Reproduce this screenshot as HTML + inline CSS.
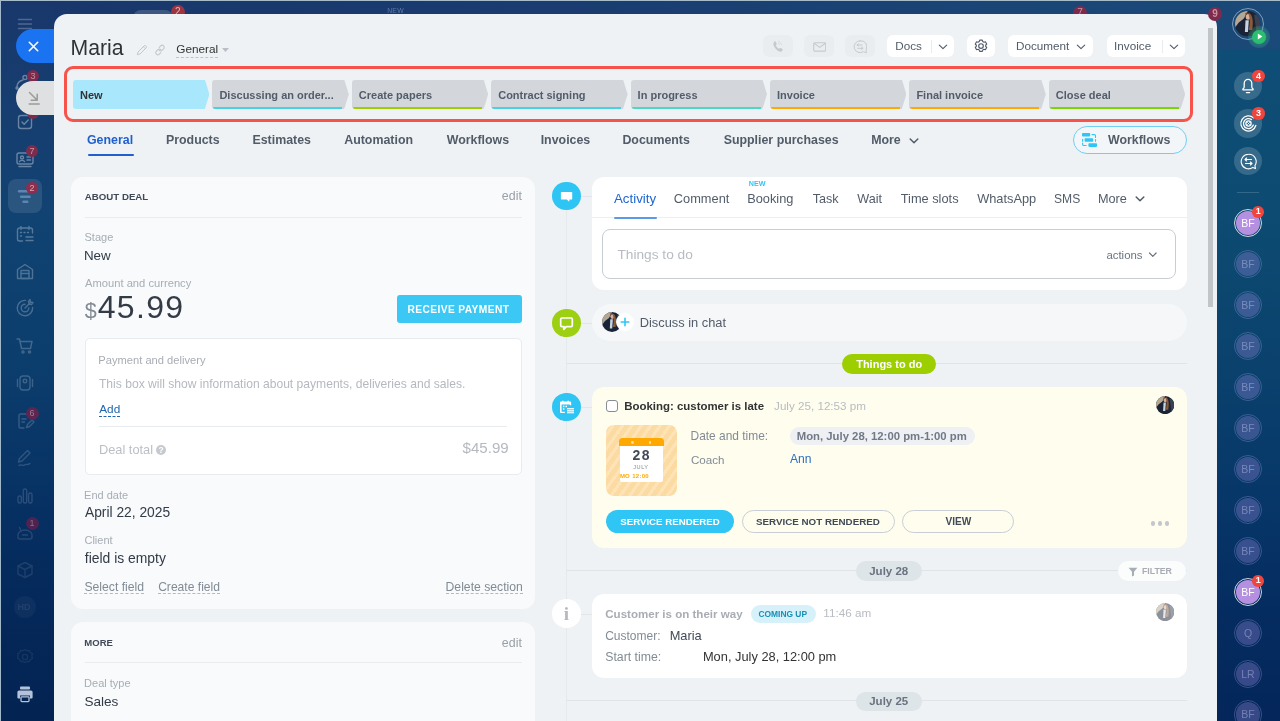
<!DOCTYPE html>
<html lang="en">
<head>
<meta charset="utf-8">
<title>Maria - Deal</title>
<style>
*{box-sizing:border-box;margin:0;padding:0}
html,body{width:1280px;height:721px;overflow:hidden}
body{position:relative;font-family:"Liberation Sans",Arial,sans-serif;color:#333;
 background:linear-gradient(180deg,#19376b 0%,#173d6f 13%,#114372 30%,#0c3e6d 50%,#083466 65%,#052a5c 80%,#032352 100%);}
.abs{position:absolute}
.t{position:absolute;white-space:nowrap;line-height:1}
/* ---------- backdrop ---------- */
#topstrip{left:0;top:0;width:1280px;height:1px;background:#a7bccb}
#leftstrip{left:0;top:0;width:1px;height:721px;background:#a2b9cb}
#rightbar{left:1216px;top:0;width:64px;height:721px;background:linear-gradient(180deg,#0f4e77 0%,#0d4b72 30%,#0a426d 50%,#073668 70%,#052c60 85%,#04265a 100%)}
#rightbartop{left:54px;top:0;width:1226px;height:49px;background:linear-gradient(90deg,#19376b 0%,#1a3c70 40%,#1a4676 80%,#1a4a79 100%)}
/* ---------- panel ---------- */
#panel{left:53.6px;top:14px;width:1163px;height:720px;background:#eef2f4;border-radius:13px 13px 0 0;overflow:hidden}
#closebtn{left:16px;top:29px;width:60px;height:34px;border-radius:17px;background:#1a73f0}
#minbtn{left:16px;top:81px;width:60px;height:34px;border-radius:17px;background:#dfe0e1}
/* header */
.hbtn{position:absolute;top:34.8px;height:22.5px;border-radius:6px;background:#fff}
.hbtn.dim{background:#eaedef}
.hbtn .t{top:5px;font-size:13px;color:#525c69}
.card{background:#f8fafb;border-radius:12px}
/* stages */
#redbox{left:64px;top:66px;width:1129px;height:56px;border:3px solid #f6534a;border-radius:9px}
.stage{position:absolute;top:80px;height:28.5px;width:136.4px}
.stage .body{position:absolute;left:0;top:0;width:131.5px;height:28.5px;background:#d3d7dc;border-radius:3px 0 0 3px}
.stage .tip{position:absolute;left:131px;top:0;width:5.4px;height:28.5px;background:#d3d7dc;clip-path:polygon(0 0,1px 0,100% 50%,1px 100%,0 100%)}
.stage .ul{position:absolute;left:1px;top:26.5px;width:129px;height:2px;border-radius:0 0 0 2px}
.stage .t{left:7px;top:10px;font-size:11px;font-weight:bold;color:#525c69}
</style>
</head>
<body>
<div id="root" style="position:absolute;left:0;top:0;width:1280px;height:721px;overflow:hidden;will-change:transform">
<!-- backdrop -->
<div class="abs" id="rightbar"></div>
<div class="abs" id="rightbartop"></div>
<div class="abs" id="topstrip"></div>
<div class="abs" id="leftstrip"></div>

<div class="abs" style="left:133.4px;top:10px;width:40px;height:8px;border-radius:8px 8px 0 0;background:rgba(255,255,255,0.16)"></div>
<div class="abs" style="left:170.5px;top:4.9px;width:14.6px;height:14.6px;border-radius:50%;background:#9c3540;color:#dcb6bd;font-size:10px;line-height:14.6px;text-align:center">2</div>
<div class="abs" style="left:1073px;top:5.6px;width:14px;height:14px;border-radius:50%;background:#7d2b4d;color:#c9929f;font-size:10px;line-height:14px;text-align:center">7</div>
<div class="t" style="left:387.14px;top:8px;font-size:6.8px;color:#5d7ba6;letter-spacing:0.3px">NEW</div>
<!-- LEFTBAR -->
<div id="leftbar">
<div class="abs" style="left:8px;top:179px;width:33.5px;height:33.5px;border-radius:8px;background:rgba(255,255,255,0.1)"></div>
<svg class="abs" style="left:15.0px;top:14.0px;opacity:0.24" width="20" height="20" viewBox="0 0 20 20" fill="none" stroke="#fff" stroke-width="1.4" stroke-linecap="round" stroke-linejoin="round"><path d="M3.5 5.5h13M3.5 10h13M3.5 14.5h13"/></svg>
<svg class="abs" style="left:13.0px;top:72.0px;opacity:0.36" width="20" height="20" viewBox="0 0 20 20" fill="none" stroke="#fff" stroke-width="1.4" stroke-linecap="round" stroke-linejoin="round"><circle cx="12" cy="5.5" r="2"/><path d="M4 15c0-4 2-6 6-7"/><circle cx="4" cy="16" r="1"/></svg>
<svg class="abs" style="left:14.5px;top:111.5px;opacity:0.36" width="20" height="20" viewBox="0 0 20 20" fill="none" stroke="#fff" stroke-width="1.4" stroke-linecap="round" stroke-linejoin="round"><rect x="3.5" y="3.5" width="13" height="13" rx="2.5"/><path d="M7 10l2.2 2.2L13.2 8"/></svg>
<svg class="abs" style="left:14.5px;top:148.5px;opacity:0.36" width="20" height="20" viewBox="0 0 20 20" fill="none" stroke="#fff" stroke-width="1.4" stroke-linecap="round" stroke-linejoin="round"><rect x="2" y="4" width="16" height="11" rx="2"/><circle cx="7" cy="8.5" r="1.5"/><path d="M4.5 12.5c.5-1.5 4.500-1.500 5 0M12 8h3.500M12 11h3.500M4 17.500h12"/></svg>
<svg class="abs" style="left:15px;top:186px;opacity:0.4" width="20" height="20" viewBox="0 0 20 20" fill="#a9d0ff"><rect x="2.800" y="4" width="14.400" height="2.600" rx="1.300"/><rect x="4.900" y="9.400" width="10.900" height="2.600" rx="1.300"/><rect x="7.300" y="14.400" width="6.200" height="2.700" rx="1.300"/></svg>
<svg class="abs" style="left:15.0px;top:223.5px;opacity:0.29" width="20" height="20" viewBox="0 0 20 20" fill="none" stroke="#fff" stroke-width="1.4" stroke-linecap="round" stroke-linejoin="round"><path d="M17.500 9V6a2 2 0 0 0-2-2h-11a2 2 0 0 0-2 2v9a2 2 0 0 0 2 2h3"/><path d="M6 2.500v3M14 2.500v3M5.500 8.500h1M9 8.500h1M12.500 8.500h1M5.500 12h1M11 13h7M11 16.500h7"/></svg>
<svg class="abs" style="left:15.0px;top:261.0px;opacity:0.26" width="20" height="20" viewBox="0 0 20 20" fill="none" stroke="#fff" stroke-width="1.4" stroke-linecap="round" stroke-linejoin="round"><path d="M2.500 17.500v-9L10 3.500l7.500 5v9z"/><rect x="6" y="9.500" width="8" height="8" rx="0.500"/><path d="M6 12.500h8"/></svg>
<svg class="abs" style="left:15.0px;top:298.0px;opacity:0.24" width="20" height="20" viewBox="0 0 20 20" fill="none" stroke="#fff" stroke-width="1.4" stroke-linecap="round" stroke-linejoin="round"><path d="M17.600 9.500A7.700 7.700 0 1 1 10.500 2.400"/><path d="M13.800 10A3.800 3.800 0 1 1 10 6.200"/><path d="M10 10l6-6M13.500 3.500l.5 2.500 2.500.5 1.500-2-2.500-.5-.5-2.500z"/></svg>
<svg class="abs" style="left:15.0px;top:336.0px;opacity:0.22" width="20" height="20" viewBox="0 0 20 20" fill="none" stroke="#fff" stroke-width="1.4" stroke-linecap="round" stroke-linejoin="round"><path d="M2 3h2.500l2 9.500h9l1.500-7H5.500"/><circle cx="8" cy="16" r="1.100"/><circle cx="14.500" cy="16" r="1.100"/></svg>
<svg class="abs" style="left:15.0px;top:373.0px;opacity:0.20" width="20" height="20" viewBox="0 0 20 20" fill="none" stroke="#fff" stroke-width="1.4" stroke-linecap="round" stroke-linejoin="round"><rect x="5" y="3" width="10" height="14" rx="3"/><circle cx="10" cy="8" r="1.800"/><path d="M2.500 6.500v7M17.500 6.500v7"/></svg>
<svg class="abs" style="left:14.5px;top:411.0px;opacity:0.18" width="20" height="20" viewBox="0 0 20 20" fill="none" stroke="#fff" stroke-width="1.4" stroke-linecap="round" stroke-linejoin="round"><path d="M14 6V4.500a1.500 1.500 0 0 0-1.500-1.500h-7A1.500 1.500 0 0 0 4 4.500v11A1.500 1.500 0 0 0 5.500 17H9"/><path d="M7 8h4M7 11h2.500"/><path d="M11.500 16.500l1-3 4.500-4.500 2 2-4.500 4.500z"/></svg>
<svg class="abs" style="left:15.0px;top:448.0px;opacity:0.16" width="20" height="20" viewBox="0 0 20 20" fill="none" stroke="#fff" stroke-width="1.4" stroke-linecap="round" stroke-linejoin="round"><path d="M3.500 14l1-3.500 8-8 2.500 2.500-8 8z"/><path d="M4 17.500c2-2 3.500 1 5.500-.5s3 .5 5.500-1.500"/></svg>
<svg class="abs" style="left:15.0px;top:486.0px;opacity:0.14" width="20" height="20" viewBox="0 0 20 20" fill="none" stroke="#fff" stroke-width="1.4" stroke-linecap="round" stroke-linejoin="round"><rect x="3" y="10" width="3.400" height="7" rx="1.500"/><rect x="8.300" y="3" width="3.400" height="14" rx="1.500"/><rect x="13.600" y="7" width="3.400" height="10" rx="1.500"/></svg>
<svg class="abs" style="left:15.0px;top:522.0px;opacity:0.13" width="20" height="20" viewBox="0 0 20 20" fill="none" stroke="#fff" stroke-width="1.4" stroke-linecap="round" stroke-linejoin="round"><path d="M3 13a7 5 0 0 1 14 0v2a2 2 0 0 1-2 2H5a2 2 0 0 1-2-2z"/><path d="M6 8.500l-1.500-3M7.500 13h5"/></svg>
<svg class="abs" style="left:15.0px;top:560.0px;opacity:0.10" width="20" height="20" viewBox="0 0 20 20" fill="none" stroke="#fff" stroke-width="1.4" stroke-linecap="round" stroke-linejoin="round"><path d="M10 2.500l7 3.500v8l-7 3.500-7-3.500V6z"/><path d="M3 6l7 3.500L17 6M10 9.500v8"/></svg>
<div class="abs" style="left:14px;top:596px;width:22px;height:22px;border-radius:50%;background:rgba(255,255,255,0.04)"></div>
<div class="t" style="left:17.40px;top:603px;font-size:9px;font-weight:bold;color:rgba(255,255,255,0.08)">HD</div>
<svg class="abs" style="left:15.0px;top:647.0px;opacity:0.07" width="20" height="20" viewBox="0 0 20 20" fill="none" stroke="#fff" stroke-width="1.4" stroke-linecap="round" stroke-linejoin="round"><circle cx="10" cy="10" r="2.600"/><path d="M10 2.500l2 1.200 2.300-.3 1 2.100 2 1.200-.4 2.300.4 2.300-2 1.200-1 2.100-2.300-.3-2 1.200-2-1.200-2.300.3-1-2.100-2-1.200.4-2.300-.4-2.300 2-1.200 1-2.100 2.300.3z"/></svg>
<svg class="abs" style="left:17px;top:686px" width="16" height="17" viewBox="0 0 16 17"><rect x="3" y="0.500" width="10" height="3" rx="0.800" fill="#b5c3da"/><path d="M2 4.500h12a1.600 1.600 0 0 1 1.600 1.600v5.400a1 1 0 0 1-1 1H13V9.500H3v3H1.400a1 1 0 0 1-1-1V6.100A1.600 1.600 0 0 1 2 4.500z" fill="#b5c3da"/><rect x="4" y="10.800" width="8" height="4.800" rx="0.800" fill="none" stroke="#b5c3da" stroke-width="1.300"/></svg>
<div class="abs badge" style="left:26.9px;top:70.1px;width:12px;height:12px;border-radius:50%;background:#7d2b4d;color:#c9929f;font-size:9px;line-height:12px;text-align:center">3</div>
<div class="abs badge" style="left:26.6px;top:107.4px;width:12px;height:12px;border-radius:50%;background:#7d2b4d;color:#c9929f;font-size:9px;line-height:12px;text-align:center"></div>
<div class="abs badge" style="left:26px;top:145px;width:12px;height:12px;border-radius:50%;background:#7d2b4d;color:#c9929f;font-size:9px;line-height:12px;text-align:center">7</div>
<div class="abs badge" style="left:26px;top:182px;width:12px;height:12px;border-radius:50%;background:#8f2d4f;color:#dba9b6;font-size:9px;line-height:12px;text-align:center">2</div>
<div class="abs badge" style="left:25.5px;top:406.5px;width:13.0px;height:13.0px;border-radius:50%;background:#5e2550;color:#a07a92;font-size:9px;line-height:13.0px;text-align:center">6</div>
<div class="abs badge" style="left:25.5px;top:516.5px;width:13.0px;height:13.0px;border-radius:50%;background:#4f2250;color:#8d6a8c;font-size:9px;line-height:13.0px;text-align:center">1</div>
</div>
<!-- RIGHTBAR -->
<div id="rightbar-items">
<div class="abs" style="left:1232px;top:8px;width:32px;height:32px;border-radius:50%;border:1px solid rgba(255,255,255,0.45)"></div>
<svg class="abs" style="left:1235.3px;top:11.3px;opacity:1" width="25.4" height="25.4" viewBox="0 0 20 20"><defs><clipPath id="av1"><circle cx="10" cy="10" r="10"/></clipPath></defs><g clip-path="url(#av1)"><rect width="20" height="20" fill="#1b2437"/><path d="M0 0H10L7 6 3 9 0 13z" fill="#b3a795"/><path d="M15 3h5v14h-3z" fill="#3a4150"/><ellipse cx="10.300" cy="4.600" rx="1.900" ry="2.300" fill="#d5b09b"/><path d="M8.300 7.200h2.600L10.200 16.500H7.800z" fill="#c7d4df"/><path d="M10.500 1.500c3.200.4 4.300 6 3 13.500h-2.800c1.400-4.500 1.200-8.500-.2-13.500z" fill="#8b5a36"/><path d="M8 1.800c.8-.8 2-.9 2.800-.3-.9.300-1.700 1-2.200 2.200z" fill="#7a4c2c"/></g></svg>
<div class="abs" style="left:1248.3px;top:25.6px;width:22px;height:22px;border-radius:50%;background:radial-gradient(circle,rgba(70,200,140,0.3) 0 50%,rgba(70,200,140,0) 100%)"></div>
<div class="abs" style="left:1252.3px;top:29.6px;width:14px;height:14px;border-radius:50%;background:#2dbd70"></div>
<svg class="abs" style="left:1257px;top:33.100px" width="6" height="7" viewBox="0 0 6 7"><path d="M0.800 0.600L5.400 3.500 0.800 6.400z" fill="#fff"/></svg>
<div class="abs" style="left:1233.5px;top:71.5px;width:28.4px;height:28.4px;margin:0.3px;border-radius:50%;background:rgba(255,255,255,0.17)"></div>
<div class="abs" style="left:1233.5px;top:109.0px;width:28.4px;height:28.4px;margin:0.3px;border-radius:50%;background:rgba(255,255,255,0.17)"></div>
<div class="abs" style="left:1233.5px;top:146.5px;width:28.4px;height:28.4px;margin:0.3px;border-radius:50%;background:rgba(255,255,255,0.17)"></div>
<svg class="abs" style="left:1239px;top:77px" width="18" height="19" viewBox="0 0 18 19" fill="none" stroke="#fff" stroke-width="1.300" stroke-linecap="round" stroke-linejoin="round"><path d="M9 2.400c-2.300 0-3.800 1.800-3.800 4.200v3.100c0 .9-.5 1.700-1.300 2.300v.8h10.200V12c-.8-.6-1.300-1.400-1.300-2.300V6.600c0-2.400-1.500-4.200-3.800-4.200z"/><path d="M7.400 15.600h3.200"/></svg>
<svg class="abs" style="left:1238.500px;top:114px" width="19" height="19" viewBox="0 0 19 19" fill="none" stroke="#fff" stroke-width="1.300" stroke-linecap="round"><path d="M16.800 11.500A7.600 7.600 0 1 1 14.500 3.800"/><path d="M14.300 11A5 5 0 1 1 12.500 5.600"/><circle cx="9.500" cy="9.500" r="2.600"/><path d="M8.500 8.500l2 2M10.500 8.500l-2 2" stroke-width="0.900"/></svg>
<svg class="abs" style="left:1238.500px;top:151.500px" width="19" height="19" viewBox="0 0 19 19" fill="none" stroke="#fff" stroke-width="1.100" stroke-linecap="round" stroke-linejoin="round"><path d="M9.500 2.200a7.300 7.300 0 1 0 4.300 13.200l2.700 1.200-.6-3A7.300 7.300 0 0 0 9.500 2.200z"/><path d="M6 7.500h6.500M6 7.500l1.600-1.500M6 7.500l1.600 1.500M13 11.500H6.500M13 11.500l-1.600-1.500M13 11.500l-1.600 1.500"/></svg>
<div class="abs" style="left:1252.3px;top:69.8px;width:12.4px;height:12.4px;border-radius:50%;background:#f0453d;color:#fff;font-size:9px;font-weight:bold;line-height:12.4px;text-align:center">4</div>
<div class="abs" style="left:1252.3px;top:107.3px;width:12.4px;height:12.4px;border-radius:50%;background:#f0453d;color:#fff;font-size:9px;font-weight:bold;line-height:12.4px;text-align:center">3</div>
<div class="abs" style="left:1236.500px;top:192px;width:22.500px;height:1px;background:rgba(255,255,255,0.16)"></div>
<div class="abs" style="left:1233.7px;top:208.7px;width:28.6px;height:28.6px;border-radius:50%;border:1px solid rgba(255,255,255,0.8)"></div>
<div class="abs" style="left:1235.7px;top:210.7px;width:24.6px;height:24.6px;border-radius:50%;background:#b58fe0"></div>
<div class="t" style="left:1228px;width:40px;text-align:center;top:218px;font-size:10.500px;color:#fff">BF</div>
<div class="abs" style="left:1252.4px;top:206.0px;width:11.6px;height:11.6px;border-radius:50%;background:#f0453d;color:#fff;font-size:9px;font-weight:bold;line-height:11.6px;text-align:center">1</div>
<div class="abs" style="left:1233.7px;top:249.7px;width:28.6px;height:28.6px;border-radius:50%;border:1px solid rgba(150,160,220,0.35)"></div>
<div class="abs" style="left:1235.7px;top:251.7px;width:24.6px;height:24.6px;border-radius:50%;background:rgba(140,130,210,0.38)"></div>
<div class="t" style="left:1228px;width:40px;text-align:center;top:259px;font-size:10.500px;color:rgba(200,205,240,0.42)">BF</div>
<div class="abs" style="left:1233.7px;top:290.7px;width:28.6px;height:28.6px;border-radius:50%;border:1px solid rgba(150,160,220,0.35)"></div>
<div class="abs" style="left:1235.7px;top:292.7px;width:24.6px;height:24.6px;border-radius:50%;background:rgba(140,130,210,0.38)"></div>
<div class="t" style="left:1228px;width:40px;text-align:center;top:300px;font-size:10.500px;color:rgba(200,205,240,0.42)">BF</div>
<div class="abs" style="left:1233.7px;top:331.7px;width:28.6px;height:28.6px;border-radius:50%;border:1px solid rgba(150,160,220,0.35)"></div>
<div class="abs" style="left:1235.7px;top:333.7px;width:24.6px;height:24.6px;border-radius:50%;background:rgba(140,130,210,0.38)"></div>
<div class="t" style="left:1228px;width:40px;text-align:center;top:341px;font-size:10.500px;color:rgba(200,205,240,0.42)">BF</div>
<div class="abs" style="left:1233.7px;top:372.7px;width:28.6px;height:28.6px;border-radius:50%;border:1px solid rgba(150,160,220,0.35)"></div>
<div class="abs" style="left:1235.7px;top:374.7px;width:24.6px;height:24.6px;border-radius:50%;background:rgba(140,130,210,0.38)"></div>
<div class="t" style="left:1228px;width:40px;text-align:center;top:382px;font-size:10.500px;color:rgba(200,205,240,0.42)">BF</div>
<div class="abs" style="left:1233.7px;top:413.7px;width:28.6px;height:28.6px;border-radius:50%;border:1px solid rgba(150,160,220,0.35)"></div>
<div class="abs" style="left:1235.7px;top:415.7px;width:24.6px;height:24.6px;border-radius:50%;background:rgba(140,130,210,0.38)"></div>
<div class="t" style="left:1228px;width:40px;text-align:center;top:423px;font-size:10.500px;color:rgba(200,205,240,0.42)">BF</div>
<div class="abs" style="left:1233.7px;top:454.7px;width:28.6px;height:28.6px;border-radius:50%;border:1px solid rgba(150,160,220,0.35)"></div>
<div class="abs" style="left:1235.7px;top:456.7px;width:24.6px;height:24.6px;border-radius:50%;background:rgba(140,130,210,0.38)"></div>
<div class="t" style="left:1228px;width:40px;text-align:center;top:464px;font-size:10.500px;color:rgba(200,205,240,0.42)">BF</div>
<div class="abs" style="left:1233.7px;top:495.7px;width:28.6px;height:28.6px;border-radius:50%;border:1px solid rgba(150,160,220,0.35)"></div>
<div class="abs" style="left:1235.7px;top:497.7px;width:24.6px;height:24.6px;border-radius:50%;background:rgba(140,130,210,0.38)"></div>
<div class="t" style="left:1228px;width:40px;text-align:center;top:505px;font-size:10.500px;color:rgba(200,205,240,0.42)">BF</div>
<div class="abs" style="left:1233.7px;top:536.7px;width:28.6px;height:28.6px;border-radius:50%;border:1px solid rgba(150,160,220,0.35)"></div>
<div class="abs" style="left:1235.7px;top:538.7px;width:24.6px;height:24.6px;border-radius:50%;background:rgba(140,130,210,0.38)"></div>
<div class="t" style="left:1228px;width:40px;text-align:center;top:546px;font-size:10.500px;color:rgba(200,205,240,0.42)">BF</div>
<div class="abs" style="left:1233.7px;top:577.7px;width:28.6px;height:28.6px;border-radius:50%;border:1px solid rgba(255,255,255,0.8)"></div>
<div class="abs" style="left:1235.7px;top:579.7px;width:24.6px;height:24.6px;border-radius:50%;background:#b58fe0"></div>
<div class="t" style="left:1228px;width:40px;text-align:center;top:587px;font-size:10.500px;color:#fff">BF</div>
<div class="abs" style="left:1252.4px;top:575.0px;width:11.6px;height:11.6px;border-radius:50%;background:#f0453d;color:#fff;font-size:9px;font-weight:bold;line-height:11.6px;text-align:center">1</div>
<div class="abs" style="left:1233.7px;top:618.7px;width:28.6px;height:28.6px;border-radius:50%;border:1px solid rgba(150,160,220,0.35)"></div>
<div class="abs" style="left:1235.7px;top:620.7px;width:24.6px;height:24.6px;border-radius:50%;background:rgba(140,130,210,0.38)"></div>
<div class="t" style="left:1228px;width:40px;text-align:center;top:628px;font-size:10.500px;color:rgba(200,205,240,0.42)">Q</div>
<div class="abs" style="left:1233.7px;top:659.7px;width:28.6px;height:28.6px;border-radius:50%;border:1px solid rgba(150,160,220,0.35)"></div>
<div class="abs" style="left:1235.7px;top:661.7px;width:24.6px;height:24.6px;border-radius:50%;background:rgba(140,130,210,0.38)"></div>
<div class="t" style="left:1228px;width:40px;text-align:center;top:669px;font-size:10.500px;color:rgba(200,205,240,0.42)">LR</div>
<div class="abs" style="left:1233.7px;top:700.2px;width:28.6px;height:28.6px;border-radius:50%;border:1px solid rgba(150,160,220,0.35)"></div>
<div class="abs" style="left:1235.7px;top:702.2px;width:24.6px;height:24.6px;border-radius:50%;background:rgba(140,130,210,0.38)"></div>
<div class="t" style="left:1228px;width:40px;text-align:center;top:709px;font-size:10.500px;color:rgba(200,205,240,0.42)">BF</div>
</div>

<div class="abs" id="closebtn"></div>
<div class="abs" id="minbtn"></div>

<svg class="abs" style="left:28px;top:41px" width="11" height="11" viewBox="0 0 11 11"><path d="M1.300 1.300l8.400 8.400M9.700 1.300L1.300 9.700" stroke="#fff" stroke-width="1.600" stroke-linecap="round"/></svg>
<svg class="abs" style="left:27px;top:90px" width="14" height="16" viewBox="0 0 14 16"><path d="M2.500 2.500l7.500 7.500M10.200 4.200v6h-6M2.200 14h10" fill="none" stroke="#9b9b9b" stroke-width="1.500" stroke-linecap="round" stroke-linejoin="round"/></svg>
<div class="abs" id="panel"></div>
<div class="abs" style="left:1208px;top:7px;width:14px;height:14px;border-radius:50%;background:#7d2b4d;color:#c9929f;font-size:10px;font-weight:bold;line-height:14px;text-align:center">9</div>
<div class="abs" style="left:1208.4px;top:27.500px;width:4.500px;height:279px;background:#c1c5c7"></div>


<!-- HEADER -->
<div class="t" style="left:70.56px;top:37px;font-size:21.2px;color:#2f3237">Maria</div>
<div class="t" style="left:176.21px;top:44px;font-size:11.8px;color:#333;border-bottom:1px dashed #bfc4ca;padding-bottom:1.2px">General</div>
<svg class="abs" style="left:136px;top:43.5px" width="12" height="12" viewBox="0 0 12 12" fill="none" stroke="#c3c8ce" stroke-width="1" stroke-linejoin="round"><path d="M1.300 10.700l.7-2.700L8.200 1.800a1.100 1.100 0 0 1 1.500 0l.5.500a1.100 1.100 0 0 1 0 1.500L4 10z"/><path d="M7.300 2.700l2 2"/></svg>
<svg class="abs" style="left:153.500px;top:43.500px" width="12" height="12" viewBox="0 0 12 12" fill="none" stroke="#c3c8ce" stroke-width="1.100" stroke-linecap="round"><path d="M5.200 3.400l1.500-1.500a2.050 2.050 0 0 1 2.900 2.900L8.100 6.300a2.050 2.050 0 0 1-2.900 0"/><path d="M6.800 8.600L5.300 10.100a2.050 2.050 0 0 1-2.900-2.900l1.500-1.500a2.050 2.050 0 0 1 2.900 0"/></svg>
<svg class="abs" style="left:222px;top:47.800px" width="7" height="4" viewBox="0 0 7 4"><path d="M0 0h7L3.500 4z" fill="#b9bfc6"/></svg>

<div class="hbtn dim" style="left:763.3px;width:29.3px"></div>
<div class="hbtn dim" style="left:803.8px;width:29.8px"></div>
<div class="hbtn dim" style="left:845px;width:30px"></div>
<div class="hbtn" style="left:887.3px;width:66.4px"></div>
<div class="hbtn" style="left:967px;width:28px"></div>
<div class="hbtn" style="left:1008px;width:85px"></div>
<div class="hbtn" style="left:1106.6px;width:78.6px"></div>
<div class="t" style="left:895.24px;top:40px;font-size:11.7px;color:#525c69">Docs</div>
<div class="t" style="left:1015.94px;top:40px;font-size:11.7px;color:#525c69">Document</div>
<div class="t" style="left:1114.12px;top:40px;font-size:11.7px;color:#525c69">Invoice</div>
<div class="abs" style="left:930.5px;top:40px;width:1px;height:13px;background:#e9ecef"></div>
<div class="abs" style="left:1161.5px;top:40px;width:1px;height:13px;background:#e9ecef"></div>
<svg class="abs" style="left:936.5px;top:42px" width="12" height="10" viewBox="0 0 12 10"><path d="M2.300 3.200 L6 6.600 L9.700 3.200" fill="none" stroke="#525c69" stroke-width="1.150" stroke-linecap="round" stroke-linejoin="round"/></svg>
<svg class="abs" style="left:1074.5px;top:42px" width="12" height="10" viewBox="0 0 12 10"><path d="M2.300 3.200 L6 6.600 L9.700 3.200" fill="none" stroke="#525c69" stroke-width="1.150" stroke-linecap="round" stroke-linejoin="round"/></svg>
<svg class="abs" style="left:1167.5px;top:42px" width="12" height="10" viewBox="0 0 12 10"><path d="M2.300 3.200 L6 6.600 L9.700 3.200" fill="none" stroke="#525c69" stroke-width="1.150" stroke-linecap="round" stroke-linejoin="round"/></svg>

<svg class="abs" style="left:771.500px;top:39.500px" width="12" height="13" viewBox="0 0 12 13"><path d="M2.300 1.600c.5-.5 1.200-.4 1.500.2l.8 1.700c.2.400.1.900-.2 1.200l-.6.600c.6 1.500 1.700 2.700 3.100 3.500l.7-.6c.4-.3.800-.4 1.200-.1l1.500 1c.5.400.6 1.100.1 1.500l-.6.600c-.6.600-1.500.8-2.300.4C4.500 10.300 2.300 7.800 1.400 4.700c-.2-.900 0-1.800.5-2.500z" fill="#c6cacf"/><path d="M6.300 1.300c1.600.2 2.900 1.500 3.200 3.100M6.200 3.200c.7.200 1.200.7 1.400 1.400" fill="none" stroke="#d3d6da" stroke-width="0.800" stroke-linecap="round"/></svg>
<svg class="abs" style="left:812.500px;top:41.500px" width="13.500" height="10" viewBox="0 0 13.500 10" fill="none" stroke="#c6cacf" stroke-width="1.100" stroke-linejoin="round"><rect x="0.700" y="0.700" width="12" height="8.400" rx="1"/><path d="M1 1.200l5.700 4.200 5.700-4.200"/></svg>
<svg class="abs" style="left:852.500px;top:39.500px" width="14" height="14" viewBox="0 0 14 14" fill="none" stroke="#c6cacf" stroke-width="1" stroke-linecap="round" stroke-linejoin="round"><path d="M7 0.800a5.900 5.900 0 1 0 3.300 10.800l3 1.200-.1-3.500A5.900 5.900 0 0 0 7 .8z"/><path d="M4.200 5h5M4.200 5l1.300-1.200M4.200 5l1.300 1.200M9.800 8.300h-5M9.800 8.300L8.500 7.100M9.800 8.300L8.500 9.500"/></svg>
<svg class="abs" style="left:973.800px;top:39.300px" width="14" height="14" viewBox="0 0 14 14" fill="none" stroke="#525c69" stroke-width="1.150" stroke-linejoin="round"><path d="M5.700 1.100h2.600l.5 1.500 1.100.6 1.500-.4 1.300 2.200-1 1.100v1.300l1 1.100-1.300 2.200-1.500-.4-1.100.6-.5 1.500H5.700l-.5-1.500-1.100-.6-1.500.4-1.300-2.200 1-1.100V6.100l-1-1.100 1.300-2.200 1.500.4 1.100-.6z" stroke-linejoin="round"/><circle cx="7" cy="7" r="2.300"/></svg>
<!-- STAGES -->
<div class="abs" id="redbox"></div>
<div class="stage" style="left:73.0px"><div class="body" style="background:#a9e7fc"></div><div class="tip" style="background:#a9e7fc"></div><div class="t" style="color:#333">New</div></div>
<div class="stage" style="left:212.4px"><div class="body"></div><div class="tip"></div><div class="ul" style="background:#47d1e2"></div><div class="t">Discussing an order...</div></div>
<div class="stage" style="left:351.8px"><div class="body"></div><div class="tip"></div><div class="ul" style="background:#9dcf00"></div><div class="t">Create papers</div></div>
<div class="stage" style="left:491.2px"><div class="body"></div><div class="tip"></div><div class="ul" style="background:#47d1e2"></div><div class="t">Contract signing</div></div>
<div class="stage" style="left:630.6px"><div class="body"></div><div class="tip"></div><div class="ul" style="background:#4dd8c4"></div><div class="t">In progress</div></div>
<div class="stage" style="left:770.0px"><div class="body"></div><div class="tip"></div><div class="ul" style="background:#ffa900"></div><div class="t">Invoice</div></div>
<div class="stage" style="left:909.4px"><div class="body"></div><div class="tip"></div><div class="ul" style="background:#ffa900"></div><div class="t">Final invoice</div></div>
<div class="stage" style="left:1048.8px"><div class="body"></div><div class="tip"></div><div class="ul" style="background:#7bd500"></div><div class="t">Close deal</div></div>

<!-- TABS -->
<div id="tabs">
<div class="t" style="left:86.99px;top:134px;font-size:12.4px;font-weight:bold;color:#525c69;color:#1f5fd0">General</div>
<div class="t" style="left:165.92px;top:134px;font-size:12.4px;font-weight:bold;color:#525c69;">Products</div>
<div class="t" style="left:252.42px;top:134px;font-size:12.4px;font-weight:bold;color:#525c69;">Estimates</div>
<div class="t" style="left:344.19px;top:134px;font-size:12.4px;font-weight:bold;color:#525c69;">Automation</div>
<div class="t" style="left:446.74px;top:134px;font-size:12.4px;font-weight:bold;color:#525c69;">Workflows</div>
<div class="t" style="left:540.67px;top:134px;font-size:12.4px;font-weight:bold;color:#525c69;">Invoices</div>
<div class="t" style="left:622.42px;top:134px;font-size:12.4px;font-weight:bold;color:#525c69;">Documents</div>
<div class="t" style="left:723.64px;top:134px;font-size:12.4px;font-weight:bold;color:#525c69;">Supplier purchases</div>
<div class="t" style="left:871.17px;top:134px;font-size:12.4px;font-weight:bold;color:#525c69;">More</div>
<div class="abs" style="left:87.5px;top:153.7px;width:46.5px;height:2px;background:#1f5fd0;border-radius:1px"></div>
<svg class="abs" style="left:908px;top:136px" width="12" height="10" viewBox="0 0 12 10"><path d="M2.2 3 L6 6.8 L9.8 3" fill="none" stroke="#525c69" stroke-width="1.5" stroke-linecap="round" stroke-linejoin="round"/></svg>
<div class="abs" style="left:1073px;top:125.5px;width:113.5px;height:28.5px;border:1px solid #6fcef3;border-radius:14.5px;background:#f3f6f8"></div>
<svg class="abs" style="left:1081px;top:132px" width="17" height="16" viewBox="0 0 17 16"><g fill="#2fc6f6"><rect x="1" y="1" width="8.2" height="3.6" rx="0.8"/><rect x="3.6" y="6.2" width="8.6" height="3.6" rx="0.8"/><rect x="7.4" y="11.3" width="8.6" height="3.6" rx="0.8"/></g><g fill="none" stroke="#2fc6f6" stroke-width="1.1" stroke-linecap="round"><path d="M11 2.6h2.2a1.3 1.3 0 0 1 1.3 1.3v1.6"/><path d="M14.5 7.6v1.6"/><path d="M1.6 7.2v2"/><path d="M1.6 11v1.2a1.3 1.3 0 0 0 1.3 1.3h2.2"/></g></svg>
<div class="t" style="left:1107.99px;top:134px;font-size:12.4px;font-weight:bold;color:#525c69">Workflows</div>
</div>
<!-- LEFTCOL -->
<div id="leftcol">
<div class="abs card" style="left:71px;top:177px;width:464px;height:431.5px"></div>
<div class="abs card" style="left:71px;top:622px;width:464px;height:140px"></div>
<div class="t" style="left:84.76px;top:192px;font-size:9.7px;font-weight:bold;color:#414a57;letter-spacing:0">ABOUT DEAL</div>
<div class="t" style="right:758.16px;top:190px;font-size:12.4px;color:#9aa0a8">edit</div>
<div class="abs" style="left:85px;top:216.5px;width:436.5px;height:1px;background:#e9ecef"></div>
<div class="t" style="left:84.50px;top:232px;font-size:11px;color:#a8adb4">Stage</div>
<div class="t" style="left:83.90px;top:249px;font-size:13.4px;color:#333b47">New</div>
<div class="t" style="left:84.98px;top:278px;font-size:11.2px;color:#a8adb4">Amount and currency</div>
<div class="t" style="left:84.77px;top:301px;font-size:21.5px;color:#828b95">$</div>
<div class="t" style="left:97.77px;top:291px;font-size:32px;color:#333b47;letter-spacing:1.3px">45.99</div>
<div class="abs" style="left:397px;top:294.5px;width:125px;height:28.5px;border-radius:3px;background:#3bc8f5"></div>
<div class="t" style="left:407.62px;top:305px;font-size:10.2px;font-weight:bold;color:#fff;letter-spacing:0.4px">RECEIVE PAYMENT</div>
<div class="abs" style="left:85px;top:338px;width:436.5px;height:136.8px;border-radius:5px;background:#fff;border:1px solid #e9ecef"></div>
<div class="t" style="left:98.34px;top:355px;font-size:11.15px;color:#a8adb4">Payment and delivery</div>
<div class="t" style="left:98.98px;top:378px;font-size:12.1px;color:#b5b9bf">This box will show information about payments, deliveries and sales.</div>
<div class="t" style="left:99.23px;top:404px;font-size:11.8px;color:#2067b0;border-bottom:1px dashed #2067b0;padding-bottom:0">Add</div>
<div class="abs" style="left:99px;top:426px;width:408px;height:1px;background:#e9ecef"></div>
<div class="t" style="left:99.00px;top:444px;font-size:12.8px;color:#bbbfc5">Deal total</div>
<div class="abs" style="left:155.8px;top:444.6px;width:10.4px;height:10.4px;border-radius:50%;background:#c6cacf"></div>
<div class="t" style="left:158.51px;top:446px;font-size:8.5px;color:#fff;font-weight:bold">?</div>
<div class="t" style="right:771.28px;top:440px;font-size:15.1px;color:#b5b9bf">$45.99</div>
<div class="t" style="left:84.10px;top:490px;font-size:11px;color:#a8adb4">End date</div>
<div class="t" style="left:84.97px;top:506px;font-size:13.8px;color:#333b47">April 22, 2025</div>
<div class="t" style="left:84.44px;top:535px;font-size:11px;color:#a8adb4">Client</div>
<div class="t" style="left:84.80px;top:552px;font-size:13.9px;color:#333b47">field is empty</div>
<div class="t" style="left:84.45px;top:581px;font-size:12.2px;color:#828b95;border-bottom:1px dashed #b4b9bf;padding-bottom:0">Select field</div>
<div class="t" style="left:158.14px;top:581px;font-size:12.1px;color:#828b95;border-bottom:1px dashed #b4b9bf;padding-bottom:0">Create field</div>
<div class="t" style="right:757.21px;top:581px;font-size:12.2px;color:#828b95;border-bottom:1px dashed #b4b9bf;padding-bottom:0">Delete section</div>
<div class="t" style="left:84.36px;top:638px;font-size:9.5px;font-weight:bold;color:#414a57">MORE</div>
<div class="t" style="right:758.16px;top:637px;font-size:12.4px;color:#9aa0a8">edit</div>
<div class="abs" style="left:85px;top:662px;width:436.5px;height:1px;background:#e9ecef"></div>
<div class="t" style="left:84.10px;top:678px;font-size:11px;color:#a8adb4">Deal type</div>
<div class="t" style="left:84.38px;top:695px;font-size:13.6px;color:#333b47">Sales</div>
</div>
<!-- RIGHTCOL -->
<div id="rightcol">
<div class="abs" style="left:566px;top:196px;width:1.2px;height:540px;background:#e5e8ec"></div>
<div class="abs" style="left:567px;top:363px;width:619.5px;height:1px;background:#e0e4e8"></div>
<div class="abs" style="left:567px;top:570px;width:619.5px;height:1px;background:#e0e4e8"></div>
<div class="abs" style="left:567px;top:700px;width:619.5px;height:1px;background:#e0e4e8"></div>
<div class="abs" style="left:575px;top:196px;width:18px;height:1px;background:#e2e6ea"></div>
<div class="abs" style="left:575px;top:322.5px;width:18px;height:1px;background:#e2e6ea"></div>
<div class="abs" style="left:575px;top:406.5px;width:18px;height:1px;background:#e2e6ea"></div>
<div class="abs" style="left:575px;top:613.5px;width:18px;height:1px;background:#e2e6ea"></div>
<div class="abs" style="left:591.5px;top:176.5px;width:595px;height:113.5px;background:#fff;border-radius:12px"></div>
<div class="abs" style="left:591.5px;top:217px;width:595px;height:1px;background:#edf0f2"></div>
<div class="t" style="left:613.97px;top:192px;font-size:13.3px;color:#2067d0">Activity</div>
<div class="t" style="left:673.85px;top:193px;font-size:12.8px;color:#525c69">Comment</div>
<div class="t" style="left:747.20px;top:193px;font-size:12.8px;color:#525c69">Booking</div>
<div class="t" style="left:812.72px;top:193px;font-size:12.6px;color:#525c69">Task</div>
<div class="t" style="left:857.34px;top:193px;font-size:12.6px;color:#525c69">Wait</div>
<div class="t" style="left:900.71px;top:193px;font-size:12.8px;color:#525c69">Time slots</div>
<div class="t" style="left:977.14px;top:193px;font-size:12.8px;color:#525c69">WhatsApp</div>
<div class="t" style="left:1054.05px;top:193px;font-size:12.1px;color:#525c69">SMS</div>
<div class="t" style="left:1097.96px;top:193px;font-size:12.7px;color:#525c69">More</div>
<div class="t" style="left:748.77px;top:180px;font-size:7.2px;font-weight:bold;color:#2fc6f6">NEW</div>
<div class="abs" style="left:614px;top:216.7px;width:42.5px;height:2px;background:#5b9be6;border-radius:1px"></div>
<svg class="abs" style="left:1133.8px;top:194px" width="12" height="10" viewBox="0 0 12 10"><path d="M2.2 3 L6 6.8 L9.8 3" fill="none" stroke="#525c69" stroke-width="1.5" stroke-linecap="round" stroke-linejoin="round"/></svg>
<div class="abs" style="left:602.25px;top:229.25px;width:573.25px;height:50px;border:1px solid #c6cdd3;border-radius:8px;background:#fff"></div>
<div class="t" style="left:617.44px;top:248px;font-size:13.7px;color:#b8bcc2">Things to do</div>
<div class="t" style="left:1106.42px;top:250px;font-size:11.4px;color:#6a737f">actions</div>
<svg class="abs" style="left:1147px;top:250px" width="12" height="10" viewBox="0 0 12 10"><path d="M2.5 3 L5.8 6.3 L9.1 3" fill="none" stroke="#6a737f" stroke-width="1.2" stroke-linecap="round" stroke-linejoin="round"/></svg>
<div class="abs" style="left:591.5px;top:304.25px;width:595px;height:37px;background:#f5f7f9;border-radius:18.5px"></div>
<svg class="abs" style="left:602px;top:311.8px;opacity:1" width="20" height="20" viewBox="0 0 20 20"><defs><clipPath id="av2"><circle cx="10" cy="10" r="10"/></clipPath></defs><g clip-path="url(#av2)"><rect width="20" height="20" fill="#1b2437"/><path d="M0 0H10L7 6 3 9 0 13z" fill="#b3a795"/><path d="M15 3h5v14h-3z" fill="#3a4150"/><ellipse cx="10.300" cy="4.600" rx="1.900" ry="2.300" fill="#d5b09b"/><path d="M8.300 7.200h2.600L10.200 16.500H7.800z" fill="#c7d4df"/><path d="M10.500 1.500c3.200.4 4.300 6 3 13.500h-2.800c1.400-4.500 1.200-8.500-.2-13.500z" fill="#8b5a36"/><path d="M8 1.800c.8-.8 2-.9 2.800-.3-.9.300-1.700 1-2.200 2.200z" fill="#7a4c2c"/></g></svg>
<div class="abs" style="left:616.3px;top:312.9px;width:18px;height:18px;border-radius:50%;background:#fff"></div>
<svg class="abs" style="left:619.6px;top:316.9px" width="10" height="10" viewBox="0 0 10 10"><path d="M5 1.2v7.6M1.2 5h7.6" stroke="#2fc6f6" stroke-width="1.6" stroke-linecap="round"/></svg>
<div class="t" style="left:639.70px;top:317px;font-size:12.85px;color:#525c69">Discuss in chat</div>
<div class="abs" style="left:552.2px;top:181.8px;width:28.6px;height:28.6px;border-radius:50%;background:#2ec4f4"></div>
<div class="abs" style="left:552.2px;top:308.7px;width:28.6px;height:28.6px;border-radius:50%;background:#9dcf12"></div>
<div class="abs" style="left:552.2px;top:392.5px;width:28.6px;height:28.6px;border-radius:50%;background:#2ec4f4"></div>
<div class="abs" style="left:552.2px;top:599.2px;width:28.6px;height:28.6px;border-radius:50%;background:#fff"></div>
<div class="abs" style="left:842px;top:354px;width:93.7px;height:20px;border-radius:10px;background:#9dcf00"></div>
<div class="t" style="left:856.18px;top:359px;font-size:11px;font-weight:bold;color:#fff">Things to do</div>
<div class="abs" style="left:591.5px;top:387px;width:595px;height:160.6px;background:#fefdee;border-radius:12px"></div>
<div class="abs" style="left:605.75px;top:400.25px;width:11.75px;height:11.75px;border:1.2px solid #858c95;border-radius:3px;background:#fff"></div>
<div class="t" style="left:624.23px;top:401px;font-size:11.45px;font-weight:bold;color:#333">Booking: customer is late</div>
<div class="t" style="left:774.07px;top:400px;font-size:11.65px;color:#b8bcc2">July 25, 12:53 pm</div>
<svg class="abs" style="left:1156.0px;top:395.79999999999995px;opacity:1" width="18.2" height="18.2" viewBox="0 0 20 20"><defs><clipPath id="av3"><circle cx="10" cy="10" r="10"/></clipPath></defs><g clip-path="url(#av3)"><rect width="20" height="20" fill="#1b2437"/><path d="M0 0H10L7 6 3 9 0 13z" fill="#b3a795"/><path d="M15 3h5v14h-3z" fill="#3a4150"/><ellipse cx="10.300" cy="4.600" rx="1.900" ry="2.300" fill="#d5b09b"/><path d="M8.300 7.200h2.600L10.200 16.500H7.800z" fill="#c7d4df"/><path d="M10.500 1.500c3.200.4 4.300 6 3 13.500h-2.800c1.400-4.500 1.200-8.500-.2-13.500z" fill="#8b5a36"/><path d="M8 1.800c.8-.8 2-.9 2.800-.3-.9.300-1.700 1-2.200 2.200z" fill="#7a4c2c"/></g></svg>
<div class="abs" style="left:606.2px;top:425px;width:71.2px;height:70.5px;border-radius:8px;background:repeating-linear-gradient(125deg,#fcdba3 0 4.6px,#fde3b5 4.6px 7.7px)"></div>
<div class="abs" style="left:619.8px;top:440px;width:43.1px;height:42.1px;background:#fff;border-radius:0 0 2px 2px"></div>
<div class="abs" style="left:618.9px;top:438.2px;width:44.8px;height:7.6px;background:#ffa900;border-radius:3.5px 3.5px 0 0"></div>
<div class="abs" style="left:631.2px;top:440.9px;width:2.8px;height:2.8px;border-radius:50%;background:#ffe0a3"></div>
<div class="abs" style="left:648.6px;top:440.9px;width:2.8px;height:2.8px;border-radius:50%;background:#ffe0a3"></div>
<div class="t" style="left:632.61px;top:448px;font-size:14px;font-weight:bold;color:#414a57;letter-spacing:1.3px">28</div>
<div class="t" style="left:633.31px;top:465px;font-size:5.6px;color:#828b95;letter-spacing:0.5px">JULY</div>
<div class="t" style="left:619.90px;top:473px;font-size:6px;font-weight:bold;color:#ffa900">MO</div>
<div class="t" style="left:632.22px;top:473px;font-size:6px;font-weight:bold;color:#ffa900;letter-spacing:0.25px">12:00</div>
<div class="t" style="left:690.52px;top:431px;font-size:11.95px;color:#828b95">Date and time:</div>
<div class="abs" style="left:789.5px;top:427px;width:185.75px;height:18px;border-radius:9px;background:#eef0f4"></div>
<div class="t" style="left:796.74px;top:431px;font-size:11.33px;font-weight:bold;color:#707985">Mon, July 28, 12:00 pm-1:00 pm</div>
<div class="t" style="left:690.91px;top:454px;font-size:11.6px;color:#828b95">Coach</div>
<div class="t" style="left:789.98px;top:453px;font-size:12.1px;color:#2a6fc0">Ann</div>
<div class="abs" style="left:605.75px;top:510.25px;width:128.5px;height:22.75px;border-radius:11.5px;background:#2fc6f6"></div>
<div class="t" style="left:620.22px;top:517px;font-size:9.7px;font-weight:bold;color:#fff">SERVICE RENDERED</div>
<div class="abs" style="left:741.75px;top:510.25px;width:153px;height:22.75px;border-radius:11.5px;border:1px solid #c8ced4;background:transparent"></div>
<div class="t" style="left:755.97px;top:517px;font-size:9.8px;font-weight:bold;color:#414a57">SERVICE NOT RENDERED</div>
<div class="abs" style="left:902.25px;top:510.25px;width:112px;height:22.75px;border-radius:11.5px;border:1px solid #c8ced4;background:transparent"></div>
<div class="t" style="left:945.43px;top:517px;font-size:10.1px;font-weight:bold;color:#414a57">VIEW</div>
<div class="abs" style="left:1150.5px;top:521px;width:4.5px;height:4.5px;border-radius:50%;background:#c3c7cd"></div>
<div class="abs" style="left:1157.5px;top:521px;width:4.5px;height:4.5px;border-radius:50%;background:#c3c7cd"></div>
<div class="abs" style="left:1164.5px;top:521px;width:4.5px;height:4.5px;border-radius:50%;background:#c3c7cd"></div>
<div class="abs" style="left:856px;top:561.3px;width:66.2px;height:19.4px;border-radius:10px;background:#dde5e8"></div>
<div class="t" style="left:869.23px;top:566px;font-size:11.5px;font-weight:bold;color:#6a737f">July 28</div>
<div class="abs" style="left:1118.4px;top:561.3px;width:67.9px;height:19.4px;border-radius:10px;background:#fbfcfc"></div>
<svg class="abs" style="left:1127.5px;top:566.5px" width="10" height="10" viewBox="0 0 10 10"><path d="M0.6 0.8h8.8L6 4.8v3.6L4 9.4V4.8z" fill="#a8adb4"/></svg>
<div class="t" style="left:1141.91px;top:567px;font-size:8.76px;font-weight:bold;color:#a8adb4">FILTER</div>
<div class="abs" style="left:591.5px;top:594px;width:595px;height:84px;background:#fff;border-radius:12px"></div>
<div class="t" style="left:605.28px;top:609px;font-size:11.56px;font-weight:bold;color:#a8adb4">Customer is on their way</div>
<div class="abs" style="left:750.5px;top:605.25px;width:65px;height:17.5px;border-radius:9px;background:#d7f1fb"></div>
<div class="t" style="left:758.40px;top:610px;font-size:8.44px;font-weight:bold;color:#1a8fb5">COMING UP</div>
<div class="t" style="left:823.31px;top:607px;font-size:11.7px;color:#b8bcc2">11:46 am</div>
<svg class="abs" style="left:1155.9px;top:602.9px;opacity:0.5" width="18.2" height="18.2" viewBox="0 0 20 20"><defs><clipPath id="av4"><circle cx="10" cy="10" r="10"/></clipPath></defs><g clip-path="url(#av4)"><rect width="20" height="20" fill="#1b2437"/><path d="M0 0H10L7 6 3 9 0 13z" fill="#b3a795"/><path d="M15 3h5v14h-3z" fill="#3a4150"/><ellipse cx="10.300" cy="4.600" rx="1.900" ry="2.300" fill="#d5b09b"/><path d="M8.300 7.200h2.600L10.200 16.500H7.800z" fill="#c7d4df"/><path d="M10.500 1.500c3.200.4 4.300 6 3 13.500h-2.800c1.400-4.500 1.200-8.500-.2-13.500z" fill="#8b5a36"/><path d="M8 1.800c.8-.8 2-.9 2.800-.3-.9.300-1.700 1-2.200 2.200z" fill="#7a4c2c"/></g></svg>
<div class="t" style="left:605.14px;top:630px;font-size:12px;color:#828b95">Customer:</div>
<div class="t" style="left:669.70px;top:630px;font-size:12.8px;color:#414a57">Maria</div>
<div class="t" style="left:605.19px;top:651px;font-size:12.3px;color:#828b95">Start time:</div>
<div class="t" style="left:702.95px;top:651px;font-size:12.84px;color:#333">Mon, July 28, 12:00 pm</div>
<div class="abs" style="left:856px;top:692px;width:66.2px;height:19.4px;border-radius:10px;background:#dde5e8"></div>
<div class="t" style="left:869.23px;top:696px;font-size:11.5px;font-weight:bold;color:#6a737f">July 25</div>

<svg class="abs" style="left:560px;top:191px" width="13" height="12" viewBox="0 0 13 12"><path d="M1.400 1.100h10.300a.5.500 0 0 1 .5.500v6.500a.5.500 0 0 1-.5.500H9.400l-.2 2.200L6.800 8.600H1.400a.5.500 0 0 1-.5-.5V1.600a.5.500 0 0 1 .5-.5z" fill="#fff"/></svg>
<svg class="abs" style="left:559px;top:316px" width="15" height="15" viewBox="0 0 15 15"><path d="M2.800 2h9.400a1.100 1.100 0 0 1 1.100 1.100v6.400a1.100 1.100 0 0 1-1.100 1.100H7.300L4.700 13.400l.3-2.800H2.800a1.100 1.100 0 0 1-1.100-1.100V3.100A1.100 1.100 0 0 1 2.800 2z" fill="none" stroke="#fff" stroke-width="1.700" stroke-linejoin="round"/></svg>
<svg class="abs" style="left:559px;top:399.500px" width="16" height="14" viewBox="0 0 16 14" fill="#fff"><path d="M1 2.500a1 1 0 0 1 1-1h1V.8h1.500v.7h4V.8H10v.7h1.200a1 1 0 0 1 1 1v2.700H10.800V4.400H2.600v7.300h3.200v1.400H2a1 1 0 0 1-1-1z"/><rect x="3.900" y="5.700" width="1.500" height="1.500"/><rect x="6.500" y="5.700" width="1.500" height="1.500"/><rect x="3.900" y="8.300" width="1.500" height="1.500"/><rect x="8" y="8.100" width="7" height="1.300"/><rect x="8" y="10.200" width="7" height="1.300"/><rect x="8" y="12.200" width="7" height="1.100"/></svg>
<div class="t" style="left:563.7px;top:604px;font-size:19px;font-family:'Liberation Serif',serif;font-weight:bold;color:#b5b8be">i</div>
</div>
</div>
</body>
</html>
